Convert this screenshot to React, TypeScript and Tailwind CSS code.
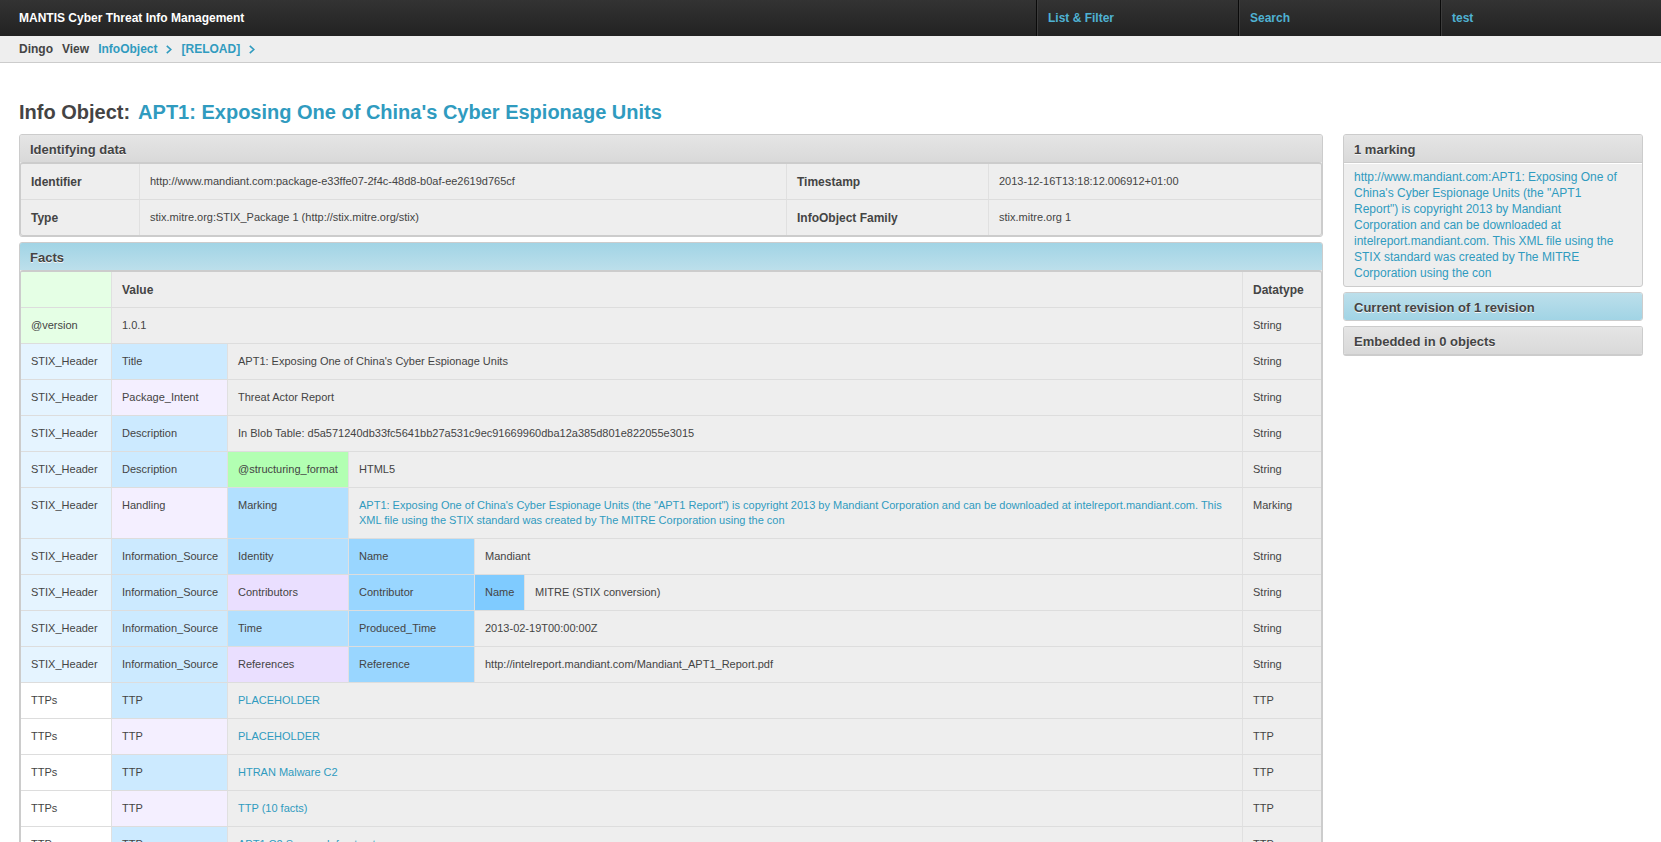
import React from 'react';

type Tone = 'green' | 'greenDeep' | 'blue1' | 'blue2' | 'blue3' | 'blue4' | 'blue5' | 'lilac1' | 'lilac2' | 'white';

const TONES: Record<Tone, string> = {
  green: 'bg-[#e5ffe5]',
  greenDeep: 'bg-[#b2ffb2]',
  blue1: 'bg-[#e5f4ff]',
  blue2: 'bg-[#cceaff]',
  blue3: 'bg-[#b2e0ff]',
  blue4: 'bg-[#99d6ff]',
  blue5: 'bg-[#7fcbff]',
  lilac1: 'bg-[#f4efff]',
  lilac2: 'bg-[#eadfff]',
  white: 'bg-white',
};

type Fact = { path: [string, Tone][]; value: string; link?: boolean; type: string };

const header: [string, Tone] = ['STIX_Header', 'blue1'];
const source: [string, Tone] = ['Information_Source', 'blue2'];
const ttps: [string, Tone] = ['TTPs', 'white'];

const FACTS: Fact[] = [
  { path: [['@version', 'green']], value: '1.0.1', type: 'String' },
  { path: [header, ['Title', 'blue2']], value: "APT1: Exposing One of China's Cyber Espionage Units", type: 'String' },
  { path: [header, ['Package_Intent', 'lilac1']], value: 'Threat Actor Report', type: 'String' },
  {
    path: [header, ['Description', 'blue2']],
    value: 'In Blob Table: d5a571240db33fc5641bb27a531c9ec91669960dba12a385d801e822055e3015',
    type: 'String',
  },
  { path: [header, ['Description', 'blue2'], ['@structuring_format', 'greenDeep']], value: 'HTML5', type: 'String' },
  {
    path: [header, ['Handling', 'lilac1'], ['Marking', 'blue3']],
    value:
      'APT1: Exposing One of China\'s Cyber Espionage Units (the "APT1 Report") is copyright 2013 by Mandiant Corporation and can be downloaded at intelreport.mandiant.com. This XML file using the STIX standard was created by The MITRE Corporation using the con',
    link: true,
    type: 'Marking',
  },
  { path: [header, source, ['Identity', 'blue3'], ['Name', 'blue4']], value: 'Mandiant', type: 'String' },
  {
    path: [header, source, ['Contributors', 'lilac2'], ['Contributor', 'blue4'], ['Name', 'blue5']],
    value: 'MITRE (STIX conversion)',
    type: 'String',
  },
  { path: [header, source, ['Time', 'blue3'], ['Produced_Time', 'blue4']], value: '2013-02-19T00:00:00Z', type: 'String' },
  {
    path: [header, source, ['References', 'lilac2'], ['Reference', 'blue4']],
    value: 'http://intelreport.mandiant.com/Mandiant_APT1_Report.pdf',
    type: 'String',
  },
  { path: [ttps, ['TTP', 'blue2']], value: 'PLACEHOLDER', link: true, type: 'TTP' },
  { path: [ttps, ['TTP', 'lilac1']], value: 'PLACEHOLDER', link: true, type: 'TTP' },
  { path: [ttps, ['TTP', 'blue2']], value: 'HTRAN Malware C2', link: true, type: 'TTP' },
  { path: [ttps, ['TTP', 'lilac1']], value: 'TTP (10 facts)', link: true, type: 'TTP' },
  { path: [ttps, ['TTP', 'blue2']], value: 'APT1 C2 Servers Infrastructure', link: true, type: 'TTP' },
];

const NAV = ['List & Filter', 'Search', 'test'];

const LINK = 'text-[#309bbf] hover:text-[#444]';
const GRAY = 'bg-linear-to-b from-[#e5e5e5] to-[#d9d9d9]';
const BLUE_DOWN = 'bg-linear-to-b from-[#a1d4e5] to-[#bcdfeb]';
const BLUE_UP = 'bg-linear-to-b from-[#bcdfeb] to-[#a1d4e5]';
const HEADING = 'px-[10px] pt-[7px] pb-[5px] text-[13px] leading-[15px] font-bold [text-shadow:0_1px_0_#f5f5f5]';
const CELL = 'border-[#ddd] border-x-[#e0e0e0] border-b p-[10px] text-left align-top';
const HEAD_CELL = `${CELL} pt-[11px] pb-[9px] text-[12px] leading-[15px]`;

function Chevron() {
  return (
    <svg className="h-[9px] w-[6px]" viewBox="0 0 6 9" fill="none" stroke="#309bbf" strokeWidth="1.6" aria-hidden="true">
      <path d="M0.8 0.8 L4.8 4.5 L0.8 8.2" />
    </svg>
  );
}

function Crumb({ label }: { label: string }) {
  return (
    <a href="#" className={`flex items-center gap-[9px] ${LINK}`}>
      {label}
      <Chevron />
    </a>
  );
}

function TableModule({ title, tone, children }: { title: string; tone: string; children: React.ReactNode }) {
  return (
    <section className="overflow-hidden rounded-[3px] border border-[#ccc] bg-[#eee]">
      <h2 className={`${HEADING} ${tone}`}>{title}</h2>
      <div className="overflow-hidden rounded-[3px] border border-t-2 border-[#ccc]">{children}</div>
    </section>
  );
}

function FactRow({ fact }: { fact: Fact }) {
  return (
    <tr>
      {fact.path.map(([label, tone], i) => (
        <td key={i} className={`${CELL} border-r ${TONES[tone]}`}>
          {label}
        </td>
      ))}
      <td className={CELL} colSpan={6 - fact.path.length}>
        {fact.link ? (
          <a href="#" className={LINK}>
            {fact.value}
          </a>
        ) : (
          fact.value
        )}
      </td>
      <td className={`${CELL} border-l`}>{fact.type}</td>
    </tr>
  );
}

export default function App() {
  return (
    <div className="min-h-screen bg-white font-['Liberation_Sans',Arial,sans-serif] text-[12px] leading-[16px] text-[#444]">
      <header className="flex h-9 bg-linear-to-b from-[#333] to-[#222] font-bold">
        <div className="flex flex-1 items-center pl-[19px] text-white">MANTIS Cyber Threat Info Management</div>
        <nav className="flex">
          {NAV.map((item) => (
            <a
              key={item}
              href="#"
              className="flex w-[202px] items-center border-l border-[#0a0a0a] text-[#4fb2d3] last:w-[221px]"
            >
              <span className="flex h-full items-center border-l border-[#3c3c3c] pl-[10px]">{item}</span>
            </a>
          ))}
        </nav>
      </header>

      <nav aria-label="Breadcrumb" className="flex h-[27px] items-center gap-[9px] border-b border-[#ccc] bg-[#eee] pl-[19px] font-bold">
        <span>Dingo</span>
        <span>View</span>
        <Crumb label="InfoObject" />
        <Crumb label="[RELOAD]" />
      </nav>

      <main className="pt-[37px] pr-[18px] pl-[19px]">
        <h1 className="mb-[10px] flex flex-wrap gap-x-2 text-[20px] leading-[24px] font-bold">
          <span>Info Object:</span>
          <a href="#" className={LINK}>
            APT1: Exposing One of China's Cyber Espionage Units
          </a>
        </h1>

        <div className="flex items-start gap-5">
          <div className="flex min-w-0 flex-1 flex-col gap-[5px]">
            <TableModule title="Identifying data" tone={GRAY}>
              <table className="w-full table-fixed border-separate border-spacing-0 text-[11px] leading-[15px] [&_tr:last-child>*]:border-b-0">
                <colgroup>
                  <col className="w-[119px]" />
                  <col />
                  <col className="w-[202px]" />
                  <col className="w-[332px]" />
                </colgroup>
                <tbody>
                  <tr>
                    <th scope="row" className={`${HEAD_CELL} border-r`}>Identifier</th>
                    <td className={`${CELL} border-r`}>http://www.mandiant.com:package-e33ffe07-2f4c-48d8-b0af-ee2619d765cf</td>
                    <th scope="row" className={`${HEAD_CELL} border-r`}>Timestamp</th>
                    <td className={CELL}>2013-12-16T13:18:12.006912+01:00</td>
                  </tr>
                  <tr>
                    <th scope="row" className={`${HEAD_CELL} border-r`}>Type</th>
                    <td className={`${CELL} border-r`}>stix.mitre.org:STIX_Package 1 (http://stix.mitre.org/stix)</td>
                    <th scope="row" className={`${HEAD_CELL} border-r`}>InfoObject Family</th>
                    <td className={CELL}>stix.mitre.org 1</td>
                  </tr>
                </tbody>
              </table>
            </TableModule>

            <TableModule title="Facts" tone={BLUE_DOWN}>
              <table className="w-full table-fixed border-separate border-spacing-0 text-[11px] leading-[15px]">
                <colgroup>
                  <col className="w-[91px]" />
                  <col className="w-[116px]" />
                  <col className="w-[121px]" />
                  <col className="w-[126px]" />
                  <col className="w-[50px]" />
                  <col />
                  <col className="w-[79px]" />
                </colgroup>
                <thead>
                  <tr>
                    <td className={`${CELL} border-r ${TONES.green}`}></td>
                    <th scope="col" className={HEAD_CELL} colSpan={5}>Value</th>
                    <th scope="col" className={`${HEAD_CELL} border-l`}>Datatype</th>
                  </tr>
                </thead>
                <tbody>
                  {FACTS.map((fact, i) => (
                    <FactRow key={i} fact={fact} />
                  ))}
                </tbody>
              </table>
            </TableModule>
          </div>

          <aside className="flex w-[300px] shrink-0 flex-col gap-[5px]">
            <section className="overflow-hidden rounded-[3px] border border-[#ccc] bg-[#eee]">
              <h2 className={`${HEADING} border-b border-[#ccc] ${GRAY}`}>1 marking</h2>
              <p className="border-t border-white py-[5px] pr-5 pl-[10px]">
                <a href="#" className={LINK}>
                  http://www.mandiant.com:APT1: Exposing One of China's Cyber Espionage Units (the "APT1 Report") is
                  copyright 2013 by Mandiant Corporation and can be downloaded at intelreport.mandiant.com. This XML
                  file using the STIX standard was created by The MITRE Corporation using the con
                </a>
              </p>
            </section>
            <section className="overflow-hidden rounded-[3px] border border-[#ccc]">
              <h2 className={`${HEADING} ${BLUE_UP}`}>Current revision of 1 revision</h2>
            </section>
            <section className="overflow-hidden rounded-[3px] border border-b-2 border-[#ccc]">
              <h2 className={`${HEADING} ${GRAY}`}>Embedded in 0 objects</h2>
            </section>
          </aside>
        </div>
      </main>
    </div>
  );
}
